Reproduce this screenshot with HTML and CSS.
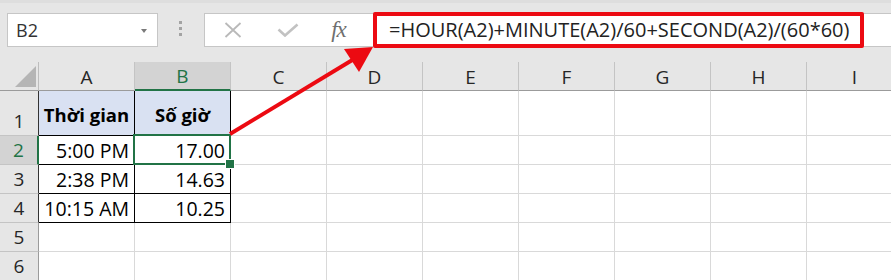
FILE: index.html
```html
<!DOCTYPE html>
<html>
<head>
<meta charset="UTF-8" />
<title>Excel - HOUR MINUTE SECOND</title>
<link rel="stylesheet" href="styles.css">
</head>
<body>

<div class="toolbar">
	<div class="namebox"><span>B2</span><span class="caret"></span></div>
	<div class="grip"><i></i><i></i><i></i></div>
	<div class="fbuttons">
		<span class="fbtn">
			<svg width="18" height="16" viewBox="0 0 18 16"><path d="M1.5 1 L16.5 15 M16.5 1 L1.5 15" stroke="#b9b9b9" stroke-width="1.8" fill="none"/></svg>
		</span>
		<span class="fbtn">
			<svg width="22" height="14" viewBox="0 0 22 14"><path d="M1.5 6.5 L8 12.5 L20.5 1.5" stroke="#c2c2c2" stroke-width="2.6" fill="none"/></svg>
		</span>
		<span class="fbtn fx">fx</span>
	</div>
	<div class="formula">
		<span class="mark">=HOUR(A2)+MINUTE(A2)/60+SECOND(A2)/(60*60)</span>
	</div>
</div>

<div class="sheet">
	<div class="corner"><svg width="22" height="22" viewBox="0 0 22 22"><path d="M0 21 L21 21 L21 0 Z" fill="#b5b5b5"/></svg></div>
	<div class="colhead">A</div>
	<div class="colhead selhead">B</div>
	<div class="colhead">C</div>
	<div class="colhead">D</div>
	<div class="colhead">E</div>
	<div class="colhead">F</div>
	<div class="colhead">G</div>
	<div class="colhead">H</div>
	<div class="colhead">I</div>

	<div class="rowhead edge">1</div>
	<div class="cell tbl title">Thời gian</div>
	<div class="cell tbl title">Số giờ</div>
	<div class="cell"></div><div class="cell"></div><div class="cell"></div><div class="cell"></div>
	<div class="cell"></div><div class="cell"></div><div class="cell"></div>

	<div class="rowhead selrow">2</div>
	<div class="cell tbl num">5:00 PM</div>
	<div class="cell tbl num active">17.00</div>
	<div class="cell"></div><div class="cell"></div><div class="cell"></div><div class="cell"></div>
	<div class="cell"></div><div class="cell"></div><div class="cell"></div>

	<div class="rowhead edge">3</div>
	<div class="cell tbl num">2:38 PM</div>
	<div class="cell tbl num">14.63</div>
	<div class="cell"></div><div class="cell"></div><div class="cell"></div><div class="cell"></div>
	<div class="cell"></div><div class="cell"></div><div class="cell"></div>

	<div class="rowhead edge">4</div>
	<div class="cell tbl num">10:15 AM</div>
	<div class="cell tbl num">10.25</div>
	<div class="cell"></div><div class="cell"></div><div class="cell"></div><div class="cell"></div>
	<div class="cell"></div><div class="cell"></div><div class="cell"></div>

	<div class="rowhead">5</div>
	<div class="cell"></div><div class="cell"></div><div class="cell"></div><div class="cell"></div><div class="cell"></div>
	<div class="cell"></div><div class="cell"></div><div class="cell"></div><div class="cell"></div>

	<div class="rowhead">6</div>
	<div class="cell"></div><div class="cell"></div><div class="cell"></div><div class="cell"></div><div class="cell"></div>
	<div class="cell"></div><div class="cell"></div><div class="cell"></div><div class="cell"></div>
</div>

<!-- mũi tên chú thích -->
<svg class="arrow" width="891" height="280" viewBox="0 0 891 280">
	<line x1="230" y1="134" x2="354" y2="59" stroke="#ec0a12" stroke-width="4"/>
	<polygon points="373,47 344,49 359,72" fill="#ec0a12"/>
</svg>

</body>
</html>
```

FILE: styles.css
```css
* {
	box-sizing: border-box;
}

body {
	margin: 0;
	width: 891px;
	height: 280px;
	overflow: hidden;
	position: relative;
	background-color: #ffffff;
	font-family: "Open Sans", "Liberation Sans", sans-serif;
	color: #000;
}

/* thanh công thức */
.toolbar {
	display: flex;
	align-items: flex-start;
	height: 62px;
	padding: 10px 0 0 7px;
	background: #e6e6e6;
	border-top: 3px solid #dedede;
}

.namebox {
	display: flex;
	align-items: center;
	justify-content: space-between;
	width: 151px;
	height: 34px;
	padding: 0 10px 0 8px;
	background: #fff;
	border: 1px solid #c6c6c6;
	font-size: 18px;
	color: #333;
}

.caret {
	width: 0;
	height: 0;
	border-left: 3.5px solid transparent;
	border-right: 3.5px solid transparent;
	border-top: 4px solid #7a7a7a;
	margin-top: 1px;
}

.grip {
	display: flex;
	flex-direction: column;
	gap: 3px;
	margin: 8px 0 0 21px;
	width: 25px;
}

.grip i {
	display: block;
	width: 3px;
	height: 3px;
	background: #a3a3a3;
}

.fbuttons {
	display: flex;
	align-items: center;
	width: 165px;
	height: 34px;
	background: #fff;
	border: 1px solid #c6c6c6;
	border-right: none;
}

.fbtn {
	display: flex;
	align-items: center;
	justify-content: center;
	width: 55px;
	height: 32px;
}

.fx {
	width: 47px;
	font-family: "Liberation Serif", serif;
	font-style: italic;
	font-size: 23px;
	color: #6f6f6f;
	letter-spacing: -1px;
}

.formula {
	flex: 1;
	height: 34px;
	background: #fff;
	border-top: 1px solid #c6c6c6;
	border-bottom: 1px solid #c6c6c6;
	padding-left: 4px;
}

.mark {
	display: inline-block;
	width: 491px;
	height: 36px;
	margin-top: -2px;
	padding: 1px 0 0 12px;
	border: 4px solid #ec0a12;
	border-radius: 2px;
	font-size: 20px;
	line-height: 26px;
	color: #222;
	white-space: nowrap;
}

/* bảng tính */
.sheet {
	display: grid;
	grid-template-columns: 39px repeat(9, 96px);
	grid-template-rows: 29px 45px repeat(5, 29px);
	width: 903px;
	font-size: 19.5px;
}

.corner {
	background: #e6e6e6;
	border-right: 1px solid #bdbdbd;
	border-bottom: 1px solid #9b9b9b;
	padding: 4px 0 0 15px;
}

.colhead {
	display: flex;
	align-items: center;
	justify-content: center;
	background: #e6e6e6;
	border-right: 1px solid #c4c4c4;
	border-bottom: 1px solid #9b9b9b;
	color: #262626;
	font-size: 19px;
	padding-top: 1px;
}

.selhead {
	background: #d3d3d3;
	color: #217346;
	border-bottom: 2px solid #217346;
}

.rowhead {
	display: flex;
	align-items: flex-end;
	justify-content: center;
	padding-bottom: 1px;
	background: #e6e6e6;
	border-right: 1px solid #9b9b9b;
	border-bottom: 1px solid #c4c4c4;
	color: #262626;
	font-size: 19px;
}

.rowhead.edge {
	border-right-color: #333;
}

.selrow {
	background: #d3d3d3;
	color: #217346;
	border-right: 2px solid #217346;
}

.cell {
	border-right: 1px solid #d9d9d9;
	border-bottom: 1px solid #d9d9d9;
}

.tbl {
	border-color: #000;
}

.title {
	display: flex;
	align-items: center;
	justify-content: center;
	background: #d9e1f2;
	font-weight: bold;
	font-size: 18.5px;
	padding-top: 2px;
}

.num {
	display: flex;
	align-items: flex-end;
	justify-content: flex-end;
	padding: 0 5px 0 0;
	line-height: 27px;
}

.active {
	position: relative;
}

.active::after {
	content: "";
	position: absolute;
	top: -2px;
	left: -2px;
	right: -1px;
	bottom: -1px;
	border: 2px solid #217346;
}

.active::before {
	content: "";
	position: absolute;
	right: -5px;
	bottom: -5px;
	width: 8px;
	height: 8px;
	background: #217346;
	border: 1px solid #fff;
	z-index: 2;
}

.arrow {
	position: absolute;
	top: 0;
	left: 0;
	pointer-events: none;
}
```
